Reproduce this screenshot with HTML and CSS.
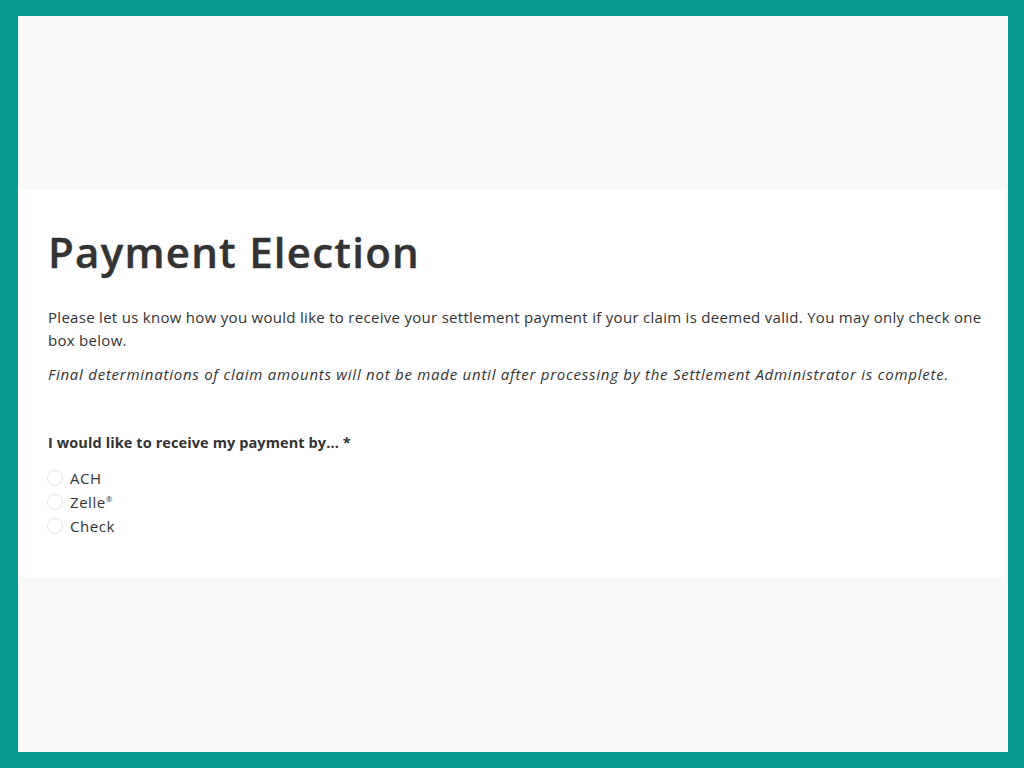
FILE: index.html
```html
<!DOCTYPE html>
<html lang="en">
<head>
<meta charset="utf-8">
<title>Payment Election</title>
<link rel="stylesheet" href="styles.css">
</head>
<body>
<div class="page">
  <div class="spacer"></div>
  <section class="card">
    <h1 class="title">Payment Election</h1>
    <p class="intro">Please let us know how you would like to receive your settlement payment if your claim is deemed valid. You may only check one box below.</p>
    <p class="note">Final determinations of claim amounts will not be made until after processing by the Settlement Administrator is complete.</p>
    <fieldset class="field">
      <legend class="label">I would like to receive my payment by... *</legend>
      <label class="option"><span class="radio"></span><span class="opt-text">ACH</span></label>
      <label class="option"><span class="radio"></span><span class="opt-text">Zelle<sup class="reg">®</sup></span></label>
      <label class="option"><span class="radio"></span><span class="opt-text">Check</span></label>
    </fieldset>
  </section>
</div>
</body>
</html>
```
FILE: styles.css
```css
html, body {
  margin: 0;
  padding: 0;
}
body {
  background: #089b94;
  padding: 16px 16px 16px 18px;
  font-family: "Open Sans", "Liberation Sans", sans-serif;
  color: #333333;
}
.page {
  background: #f9f9f9;
  height: 736px;
  display: flex;
  flex-direction: column;
}
.spacer {
  height: 174px;
  flex: none;
}
.card {
  background: #ffffff;
  margin-right: 3px;
  height: 387px;
  box-sizing: border-box;
  padding: 34px 16px 0 30px;
}
.title {
  margin: 0;
  font-size: 42px;
  line-height: 56px;
  font-weight: 600;
  color: #333333;
  letter-spacing: 1.25px;
  -webkit-text-stroke: 0.4px #333333;
}
.intro {
  margin: 26px 0 0 0;
  font-size: 15px;
  line-height: 23px;
  letter-spacing: 0.29px;
}
.note {
  margin: 11px 0 0 0;
  font-size: 15px;
  line-height: 23px;
  font-style: italic;
  letter-spacing: 0.75px;
}
.field {
  border: 0;
  margin: 46px 0 0 0;
  padding: 0;
}
.label {
  padding: 0;
  font-size: 14.5px;
  font-weight: 700;
  line-height: 22px;
  margin-bottom: 12px;
  letter-spacing: 0.1px;
}
.option {
  display: flex;
  align-items: center;
  gap: 7px;
  height: 24px;
  font-size: 15px;
  letter-spacing: 0.55px;
}
.radio {
  width: 14px;
  height: 14px;
  border: 1px solid #e4e4e4;
  border-radius: 50%;
  box-sizing: content-box;
  flex: none;
  margin-left: -1px;
}
.reg {
  font-size: 8px;
  vertical-align: 6px;
  line-height: 0;
}
```
